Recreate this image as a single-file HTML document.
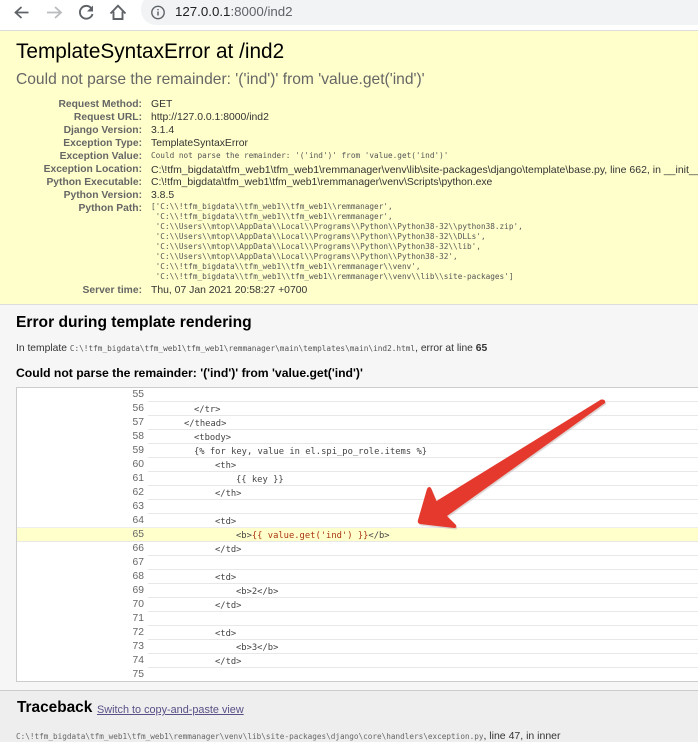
<!DOCTYPE html>
<html><head><meta charset="utf-8"><style>
html,body{margin:0;padding:0;background:#fff}
body{position:relative;width:698px;height:742px;overflow:hidden;font-family:"Liberation Sans",sans-serif}
div{position:absolute}
.t{white-space:pre;line-height:14px}
.l{right:556px;font-size:10.3px;font-weight:bold;color:#666;white-space:pre;line-height:14px;text-align:right}
.v{left:151px;font-size:10.4px;color:#333;white-space:pre;line-height:14px}
.m{left:151px;font-family:"DejaVu Sans Mono",monospace;font-size:7.72px;color:#555;white-space:pre;line-height:12px}
.n{right:554px;font-size:10.3px;color:#666;line-height:14px}
.c{font-family:"DejaVu Sans Mono",monospace;font-size:8.8px;color:#444;white-space:pre;line-height:14px}
.r{left:148px;right:0;height:1px;background:#e8e8e8}
</style></head><body>
<div style="left:0;top:0;width:698px;height:31px;background:#fff;border-bottom:0"></div>
<div style="left:141px;top:-6px;width:570px;height:31px;border-radius:15px;background:#f1f3f4"></div>
<svg style="position:absolute;left:0;top:0" width="140" height="30" viewBox="0 0 140 30" fill="none">
<path d="M28.500 12.500H16.500M21.500 7l-6 5.500 6 5.500" stroke="#5f6368" stroke-width="1.8"/>
<path d="M47 12.500h13.500M55 7l6 5.500-6 5.500" stroke="#b9bbbe" stroke-width="1.8"/>
<path d="M91.500 8.500a6.400 6.400 0 1 0 1 5.500" stroke="#5f6368" stroke-width="1.9"/>
<path d="M93 5.500v6h-6z" fill="#5f6368"/>
<path d="M110.500 13.500l7.500-7.800 7.500 7.800M113.500 11.500v7.500h9v-7.500" stroke="#5f6368" stroke-width="1.9"/>
</svg>
<svg style="position:absolute;left:150px;top:4px" width="17" height="17" viewBox="0 0 17 17" fill="none">
<circle cx="8" cy="8.500" r="6.200" stroke="#5f6368" stroke-width="1.400"/>
<path d="M8 7.500v4M8 5v1.300" stroke="#5f6368" stroke-width="1.500"/>
</svg>
<div class="t" style="left:175px;top:5px;font-size:13.3px;color:#5f6368"><span style="color:#202124">127.0.0.1</span>:8000/ind2</div>

<div style="left:0;top:30px;width:698px;height:274px;background:#ffc;border-top:1px solid #ddd;box-sizing:border-box"></div>
<div class="t" style="left:16px;top:40px;font-size:20.8px;line-height:24px;color:#000">TemplateSyntaxError at /ind2</div>
<div class="t" style="left:16px;top:70px;font-size:15.6px;line-height:20px;color:#666">Could not parse the remainder: '('ind')' from 'value.get('ind')'</div>

<div class="l" style="top:98px">Request Method:</div><div class="v" style="top:98px">GET</div>
<div class="l" style="top:111px">Request URL:</div><div class="v" style="top:111px">http://127.0.0.1:8000/ind2</div>
<div class="l" style="top:124px">Django Version:</div><div class="v" style="top:124px">3.1.4</div>
<div class="l" style="top:137px">Exception Type:</div><div class="v" style="top:137px">TemplateSyntaxError</div>
<div class="l" style="top:150px">Exception Value:</div><div class="m" style="top:150px">Could not parse the remainder: '('ind')' from 'value.get('ind')'</div>
<div class="l" style="top:163px">Exception Location:</div><div class="v" style="top:163px;font-size:10.5px">C:\!tfm_bigdata\tfm_web1\tfm_web1\remmanager\venv\lib\site-packages\django\template\base.py, line 662, in __init__</div>
<div class="l" style="top:176px">Python Executable:</div><div class="v" style="top:176px">C:\!tfm_bigdata\tfm_web1\tfm_web1\remmanager\venv\Scripts\python.exe</div>
<div class="l" style="top:189px">Python Version:</div><div class="v" style="top:189px">3.8.5</div>
<div class="l" style="top:202px">Python Path:</div>
<div class="m" style="top:202px;line-height:10px">['C:\\!tfm_bigdata\\tfm_web1\\tfm_web1\\remmanager',
 'C:\\!tfm_bigdata\\tfm_web1\\tfm_web1\\remmanager',
 'C:\\Users\\mtop\\AppData\\Local\\Programs\\Python\\Python38-32\\python38.zip',
 'C:\\Users\\mtop\\AppData\\Local\\Programs\\Python\\Python38-32\\DLLs',
 'C:\\Users\\mtop\\AppData\\Local\\Programs\\Python\\Python38-32\\lib',
 'C:\\Users\\mtop\\AppData\\Local\\Programs\\Python\\Python38-32',
 'C:\\!tfm_bigdata\\tfm_web1\\tfm_web1\\remmanager\\venv',
 'C:\\!tfm_bigdata\\tfm_web1\\tfm_web1\\remmanager\\venv\\lib\\site-packages']</div>
<div class="l" style="top:284px">Server time:</div><div class="v" style="top:284px">Thu, 07 Jan 2021 20:58:27 +0700</div>

<div style="left:0;top:304px;width:698px;height:386px;background:#f6f6f6;border-top:1px solid #ddd;box-sizing:border-box"></div>
<div class="t" style="left:16px;top:313px;font-size:15.6px;line-height:20px;font-weight:bold;color:#000">Error during template rendering</div>
<div class="t" style="left:16px;top:342px;font-size:10.3px;color:#333">In template <span style="font-family:'DejaVu Sans Mono',monospace;font-size:7.75px;color:#555">C:\!tfm_bigdata\tfm_web1\tfm_web1\remmanager\main\templates\main\ind2.html</span>, error at line <b>65</b></div>
<div class="t" style="left:16px;top:366px;font-size:12.2px;font-weight:bold;color:#000">Could not parse the remainder: '('ind')' from 'value.get('ind')'</div>

<div style="left:16px;top:387px;width:700px;height:295px;background:#fff;border:1px solid #ccc;box-sizing:border-box"></div>
<div class="r" style="top:401px"></div><div class="r" style="top:415px"></div><div class="r" style="top:429px"></div><div class="r" style="top:443px"></div><div class="r" style="top:457px"></div><div class="r" style="top:471px"></div><div class="r" style="top:485px"></div><div class="r" style="top:499px"></div><div class="r" style="top:513px"></div>
<div style="left:17px;right:0;top:527px;height:15px;background:#ffc;border-top:1px solid #eee;border-bottom:1px solid #e8e8e8;box-sizing:border-box"></div>
<div class="r" style="top:555px"></div><div class="r" style="top:569px"></div><div class="r" style="top:583px"></div><div class="r" style="top:597px"></div><div class="r" style="top:611px"></div><div class="r" style="top:625px"></div><div class="r" style="top:639px"></div><div class="r" style="top:653px"></div><div class="r" style="top:667px"></div>

<div class="n" style="top:388px">55</div><div class="n" style="top:402px">56</div><div class="n" style="top:416px">57</div><div class="n" style="top:430px">58</div><div class="n" style="top:444px">59</div><div class="n" style="top:458px">60</div><div class="n" style="top:472px">61</div><div class="n" style="top:486px">62</div><div class="n" style="top:500px">63</div><div class="n" style="top:514px">64</div><div class="n" style="top:528px">65</div><div class="n" style="top:542px">66</div><div class="n" style="top:556px">67</div><div class="n" style="top:570px">68</div><div class="n" style="top:584px">69</div><div class="n" style="top:598px">70</div><div class="n" style="top:612px">71</div><div class="n" style="top:626px">72</div><div class="n" style="top:640px">73</div><div class="n" style="top:654px">74</div><div class="n" style="top:668px">75</div>

<div class="c" style="left:194px;top:403px">&lt;/tr&gt;</div>
<div class="c" style="left:184px;top:417px">&lt;/thead&gt;</div>
<div class="c" style="left:194px;top:431px">&lt;tbody&gt;</div>
<div class="c" style="left:194px;top:445px">{% for key, value in el.spi_po_role.items %}</div>
<div class="c" style="left:215px;top:459px">&lt;th&gt;</div>
<div class="c" style="left:236px;top:473px">{{ key }}</div>
<div class="c" style="left:215px;top:487px">&lt;/th&gt;</div>
<div class="c" style="left:215px;top:515px">&lt;td&gt;</div>
<div class="c" style="left:236px;top:529px">&lt;b&gt;<span style="color:#a31">{{ value.get('ind') }}</span>&lt;/b&gt;</div>
<div class="c" style="left:215px;top:543px">&lt;/td&gt;</div>
<div class="c" style="left:215px;top:571px">&lt;td&gt;</div>
<div class="c" style="left:236px;top:585px">&lt;b&gt;2&lt;/b&gt;</div>
<div class="c" style="left:215px;top:599px">&lt;/td&gt;</div>
<div class="c" style="left:215px;top:627px">&lt;td&gt;</div>
<div class="c" style="left:236px;top:641px">&lt;b&gt;3&lt;/b&gt;</div>
<div class="c" style="left:215px;top:655px">&lt;/td&gt;</div>

<svg style="position:absolute;left:0;top:0" width="698" height="742" viewBox="0 0 698 742">
<path d="M601 399.500Q606 399 605 403L447 516L456 525Q457 528 454 528L420 524Q417 523 418 520L427 489Q429 485.500 431 488L436.500 501Z" fill="#b9a9a6" opacity=".45" transform="translate(1 1.5)"/>
<path d="M601 399.500Q606 399 605 403L447 516L456 525Q457 528 454 528L420 524Q417 523 418 520L427 489Q429 485.500 431 488L436.500 501Z" fill="#e5392e"/>
</svg>

<div style="left:0;top:690px;width:698px;height:52px;background:#eee;border-top:1px solid #ccc;box-sizing:border-box"></div>
<div class="t" style="left:17px;top:698px;font-size:15.4px;line-height:20px;font-weight:bold;color:#000">Traceback</div>
<div class="t" style="left:97px;top:703px;font-size:10.87px;color:#5a4f86;text-decoration:underline">Switch to copy-and-paste view</div>
<div class="t" style="left:16px;top:729px;font-family:'DejaVu Sans Mono',monospace;font-size:7.7px;color:#666">C:\!tfm_bigdata\tfm_web1\tfm_web1\remmanager\venv\lib\site-packages\django\core\handlers\exception.py<span style="font-family:'Liberation Sans',sans-serif;font-size:10.5px;color:#333">, line 47, in inner</span></div>
</body></html>
